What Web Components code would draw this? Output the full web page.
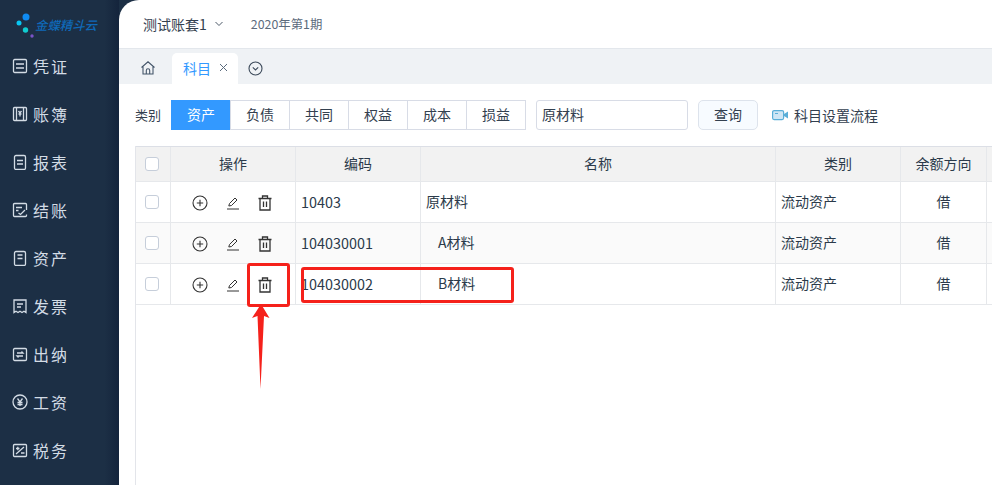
<!DOCTYPE html>
<html lang="zh"><head><meta charset="utf-8"><title>科目</title>
<style>
html,body{margin:0;height:100%;overflow:hidden;background:#1c2f45}
body{font-family:"Noto Sans CJK SC","Noto Sans",sans-serif;font-size:14px;color:#2b3a4a}
</style></head><body>
<app-shell>
  <side-bar slot="side">
    <nav-item label="凭证" icon="voucher"></nav-item>
    <nav-item label="账簿" icon="book"></nav-item>
    <nav-item label="报表" icon="report"></nav-item>
    <nav-item label="结账" icon="close"></nav-item>
    <nav-item label="资产" icon="asset"></nav-item>
    <nav-item label="发票" icon="invoice"></nav-item>
    <nav-item label="出纳" icon="cash"></nav-item>
    <nav-item label="工资" icon="salary"></nav-item>
    <nav-item label="税务" icon="tax"></nav-item>
  </side-bar>
  <top-bar></top-bar>
  <tab-strip></tab-strip>
  <filter-bar></filter-bar>
  <account-table></account-table>
  <mark-up></mark-up>
</app-shell>
<script>
function def(name, html, setup){
  customElements.define(name, class extends HTMLElement{
    connectedCallback(){
      if(this.shadowRoot) return;
      const r=this.attachShadow({mode:'open'});
      r.innerHTML=typeof html==='function'?html(this):html;
      if(setup) setup(r,this);
    }
  });
}
const S='fill="none" stroke="currentColor" stroke-width="1.3"';
const navIcons={
 voucher:`<rect x="1.5" y="1.5" width="13" height="13" rx="1.2"/><path d="M4 6h8M4 10h8"/>`,
 book:`<rect x="1.5" y="1.5" width="13" height="13" rx="1"/><path d="M4.5 1.5v13M11.5 1.5v13M6.5 5l1.500 2 1.500-2M8 7v3.500M6.500 8h3"/>`,
 report:`<rect x="2.5" y="1.5" width="11" height="14" rx="1.5"/><path d="M5 6.500h6M5 10h6"/>`,
 close:`<path d="M14.500 8V2.500a1 1 0 0 0-1-1h-11a1 1 0 0 0-1 1v11a1 1 0 0 0 1 1h11a1 1 0 0 0 1-1v-1"/><path d="M4 5.500h6M4 8.500h2.500M6.500 11l2 1.500 4.500-4.500"/>`,
 asset:`<rect x="2.5" y="1.5" width="11" height="14" rx="1.5"/><path d="M5.500 5h5M5.500 8.500h5M5.500 12.500h0"/>`,
 invoice:`<path d="M2 2h12v12.500l-2-1.300-2 1.300-2-1.300-2 1.300-2-1.300-2 1.300z"/><path d="M5 6h6M5 9h4"/>`,
 cash:`<rect x="1.5" y="2.5" width="13" height="12" rx="1.2"/><path d="M5 7h6L9.500 5.500M11 10H5l1.500 1.500"/>`,
 salary:`<circle cx="8" cy="8" r="7"/><path d="M5.500 4.500 8 8l2.500-3.500M8 8v4M5.500 8.500h5M5.500 10.500h5"/>`,
 tax:`<rect x="1.5" y="2.5" width="13" height="12" rx="1"/><path d="M4 12 12 5M4 6.500h3.500M5.800 4.700v3.600M9 11h3.500"/>`
};

def('app-shell',`<style>
:host{display:flex;width:992px;height:485px;position:relative;overflow:hidden;background:#1c2f45}
main{flex:1;min-width:0;display:flex;flex-direction:column;background:#fff;border-top-left-radius:20px;overflow:hidden}
</style><slot name="side"></slot><main><slot></slot></main>`);

def('side-bar',`<style>
:host{display:flex;flex-direction:column;width:119px;flex:none;background:linear-gradient(90deg,#1c2f45 0,#1c2f45 88%,#14243c 100%);overflow:hidden}
.logo{height:42px;display:flex;align-items:flex-start;flex:none}
.logo svg{flex:none;margin:13px 0 0 16px}
.logo span{margin:16px 0 0 1px;font:italic 500 12.400px/18px "Noto Sans CJK SC",sans-serif;color:#0f69b8;white-space:nowrap}
.list{display:flex;flex-direction:column}
</style><div class="logo"><svg width="18" height="25" viewBox="0 0 18 25"><circle cx="10" cy="4" r="3.500" fill="#0f8bf2"/><circle cx="3" cy="10" r="2.500" fill="#08c6f2"/><circle cx="9.500" cy="17" r="2.700" fill="#10ccd0"/><circle cx="16" cy="23" r="1.700" fill="#7a53c8"/></svg><span>金蝶精斗云</span></div><div class="list"><slot></slot></div>`);

def('nav-item',h=>`<style>
:host{display:flex;align-items:center;height:48.100px;padding-left:12px;color:#d3dce5;font-size:16px;letter-spacing:2px;white-space:nowrap}
svg{flex:none;margin-right:5px;margin-top:-1px}
span{margin-top:-1px}
</style><svg width="16" height="16" viewBox="0 0 16 16" ${S}>${navIcons[h.getAttribute('icon')]}</svg><span>${h.getAttribute('label')}</span>`);

def('top-bar',`<style>
:host{display:flex;align-items:center;height:49px;flex:none;box-sizing:border-box;border-bottom:1px solid #e3e7ec;padding:0 0 1px 24px;white-space:nowrap}
.a{font-size:14px;color:#33404f}
svg{margin:0 0 0 7px}
.b{margin-left:27px;font-size:12.400px;color:#5c6b7c}
</style><span class="a">测试账套1</span><svg width="10" height="10" viewBox="0 0 10 10" fill="none" stroke="#4d5a69" stroke-width="1"><path d="M1.500 3 5 6.500 8.500 3"/></svg><span class="b">2020年第1期</span>`);

def('tab-strip',`<style>
:host{display:flex;align-items:flex-end;height:35px;flex:none;background:#eff2f5;padding-left:21px;box-sizing:border-box}
.home{align-self:center;display:flex;margin:2px 16px 0 0}
.tab{display:flex;align-items:center;width:66px;height:31px;box-sizing:border-box;padding:0 0 2px 11px;background:#fff;border-radius:5px 5px 0 0;color:#3399ff;font-size:14px;gap:8px}
.tab svg{flex:none}
.more{align-self:center;display:flex;margin:3px 0 0 10px}
</style><span class="home"><svg width="16" height="16" viewBox="0 0 16 16" fill="none" stroke="#44566a" stroke-width="1.100"><path d="M1.500 7.500 8 1.800l6.500 5.700M3 6.500V14h10V6.500M6.300 14v-3.500a1.700 1.700 0 0 1 3.400 0V14"/></svg></span><div class="tab"><span>科目</span><svg width="9" height="9" viewBox="0 0 9 9" stroke="#5a6b7d" stroke-width="1"><path d="M1 1l7 7M8 1 1 8"/></svg></div><span class="more"><svg width="15" height="15" viewBox="0 0 15 15" fill="none" stroke="#3c4a5a" stroke-width="1.100"><circle cx="7.500" cy="7.500" r="6.500"/><path d="M4.800 6.300 7.500 9l2.700-2.700"/></svg></span>`);

def('filter-bar',`<style>
:host{display:flex;align-items:center;height:30px;flex:none;margin:16px 0 16px 16px;font-size:14px;color:#33404f;white-space:nowrap}
.lab{width:36px;flex:none;font-size:13px;padding-bottom:2px}
.seg{display:flex;height:30px;box-sizing:border-box;border:1px solid #d8dce6;border-left:0;flex:none}
.seg span{width:59px;box-sizing:border-box;display:flex;align-items:center;justify-content:center;border-left:1px solid #d8dce6;padding-bottom:2px}
.seg span.on{background:#3399ff;color:#fff;border-color:#3399ff;margin-top:-1px;margin-bottom:-1px}
.inp{margin-left:10px;width:152px;height:30px;box-sizing:border-box;border:1px solid #d8dce6;border-radius:3px;padding:0 0 2px 5px;display:flex;align-items:center;flex:none}
.btn{margin-left:10px;width:60px;height:30px;box-sizing:border-box;border:1px solid #dde3ec;border-radius:5px;background:#f7fbff;display:flex;align-items:center;justify-content:center;flex:none;padding-bottom:2px}
.vid{margin-left:14px;flex:none;display:flex}
.txt{margin-left:6px;font-size:14px}
</style><span class="lab">类别</span><div class="seg"><span class="on">资产</span><span>负债</span><span>共同</span><span>权益</span><span>成本</span><span>损益</span></div><div class="inp">原材料</div><div class="btn">查询</div><span class="vid"><svg width="16" height="12" viewBox="0 0 16 12"><rect x=".6" y="1.600" width="11" height="9" rx="1.500" fill="#cfe6f5" stroke="#5aaed8" stroke-width="1.200"/><path d="M12 5l4-2.500v7L12 7z" fill="#5aaed8"/><path d="M3 4.500h3" stroke="#5aaed8"/></svg></span><span class="txt">科目设置流程</span>`);

const plus=`<svg width="16" height="16" viewBox="0 0 16 16" fill="none" stroke="#333" stroke-width="1.100"><circle cx="8" cy="8" r="7"/><path d="M4.800 8h6.400M8 4.800v6.400"/></svg>`;
const edit=`<svg width="14" height="14" viewBox="0 0 14 14" fill="none" stroke="#333" stroke-width="1"><path d="M2.800 10 3.500 7.500 9 2l2 2-5.500 5.500zM1 13h12"/></svg>`;
const trash=`<svg width="14" height="16" viewBox="0 0 14 16" fill="none" stroke="#333" stroke-width="1.300"><path d="M.5 3.500h13M4.500 3.500V1h5v2.500M2 3.500V15h10V3.500"/><path d="M5.500 6.500v5.500M8.500 6.500v5.500"/></svg>`;
const rows=[['10403','原材料',0],['104030001','A材料',1],['104030002','B材料',1]];
def('account-table',`<style>
:host{display:block;flex:1;min-height:0;margin-left:16px;border-left:1px solid #e3e5ea;width:900px;font-size:14px;color:#2b3a4a}
.row{display:grid;grid-template-columns:35px 125px 125px 355px 125px 86px 40px;height:41px;border-bottom:1px solid #e6e8eb;box-sizing:border-box}
.row.head{height:36px;background:#f2f2f2;border-top:1px solid #dcdfe6}
.row.alt{background:#fafafa}
.c{border-right:1px solid #e6e8eb;display:flex;align-items:center;padding:0 5px 2px;white-space:nowrap;overflow:hidden}
.ctr{justify-content:center}
.num{font-size:14.400px;padding-left:5px}
.child{padding-left:17px}
.box{width:12px;height:12px;border:1px solid #c6ceda;border-radius:3px;background:#fff;margin:2px 2px 0 0;flex:none}
.ops{padding:2px 0 0 22px;gap:18px;justify-content:flex-start}
.ops span{display:flex;width:14px;justify-content:center}
.ops svg{flex:none}
.ops span+span svg{position:relative;left:1px}
</style><div class="row head"><div class="c ctr"><i class="box"></i></div><div class="c ctr">操作</div><div class="c ctr">编码</div><div class="c ctr">名称</div><div class="c ctr">类别</div><div class="c ctr">余额方向</div><div class="c"></div></div>
${rows.map((r,i)=>`<div class="row${i==1?' alt':''}"><div class="c ctr"><i class="box"></i></div><div class="c ops"><span>${plus}</span><span>${edit}</span><span>${trash}</span></div><div class="c num">${r[0]}</div><div class="c${r[2]?' child':''}">${r[1]}</div><div class="c">流动资产</div><div class="c ctr">借</div><div class="c"></div></div>`).join('')}`);

def('mark-up',`<style>
:host{position:absolute;inset:0;pointer-events:none;display:block}
.r{position:absolute;box-sizing:border-box;border:3px solid #f5211b;border-radius:3px}
svg{position:absolute;left:0;top:0}
</style><div class="r" style="left:247px;top:263px;width:43px;height:44px"></div><div class="r" style="left:301px;top:267px;width:213px;height:36px"></div><svg width="992" height="485"><polygon points="261,304 269.500,318 264,316 260.500,389 257.500,316 252,318" fill="#f5211b"/></svg>`);
</script>
</body></html>
